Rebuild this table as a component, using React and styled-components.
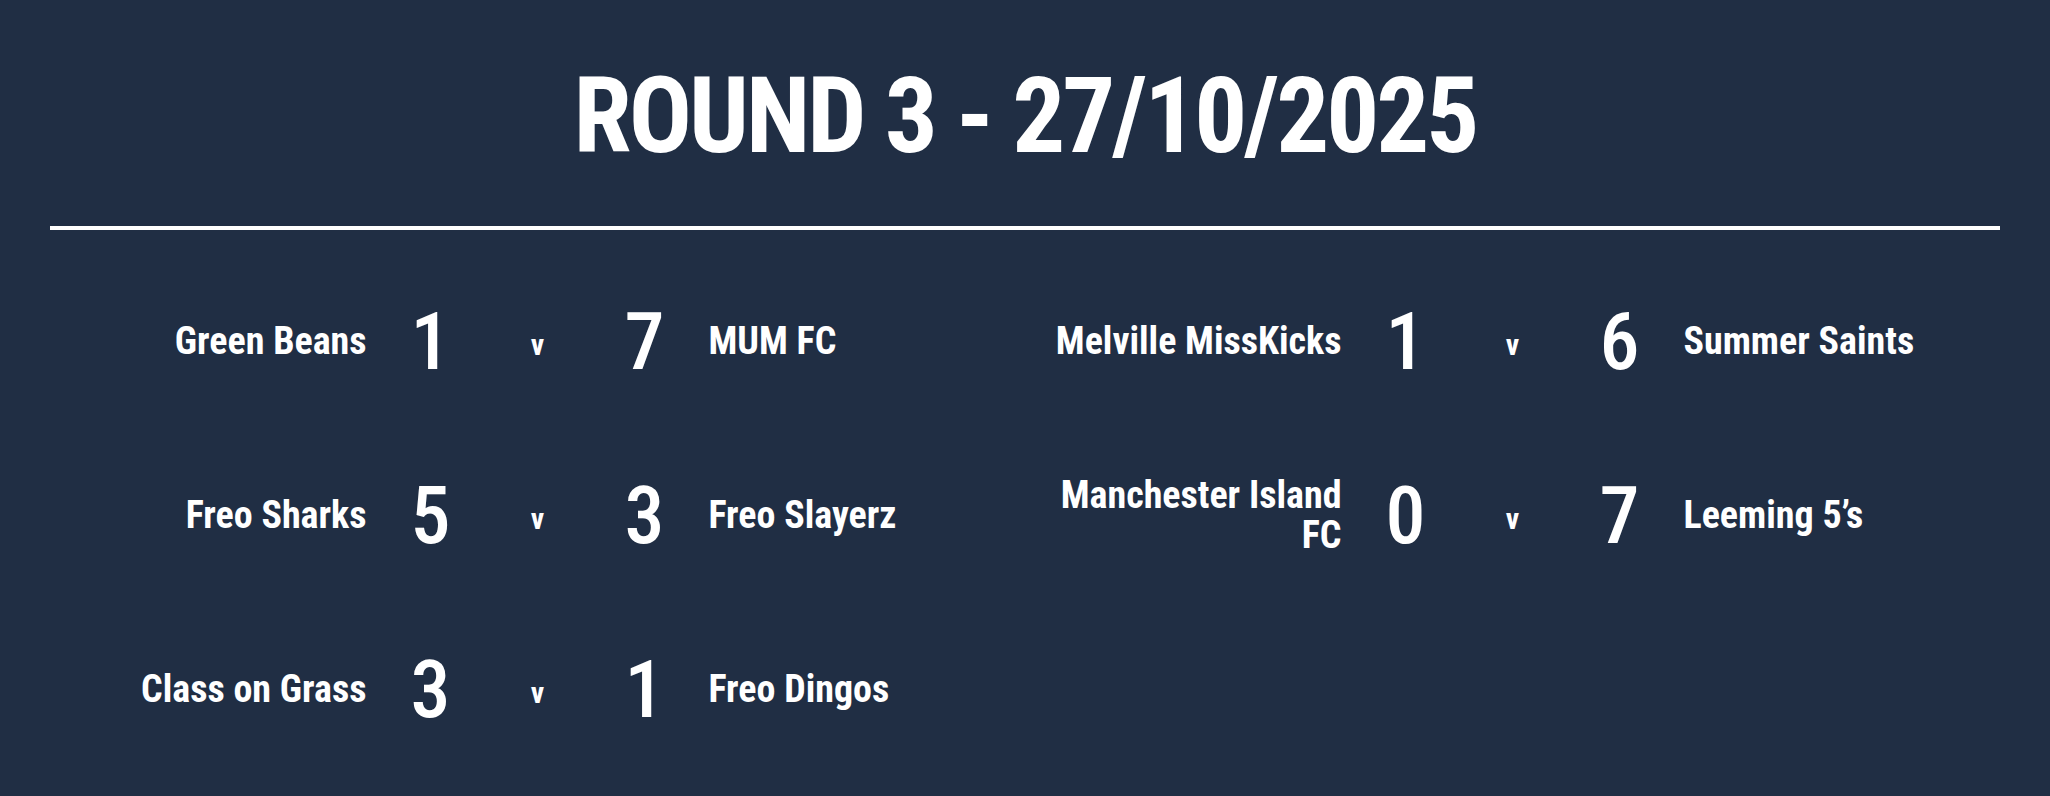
import React from 'react';
import styled, { createGlobalStyle } from 'styled-components';

const GlobalStyle = createGlobalStyle`
  html, body {
    margin: 0;
    padding: 0;
    background: #202e44;
  }
  body {
    font-family: "Roboto Condensed", "Liberation Sans", sans-serif;
    color: #ffffff;
  }
`;

const Page = styled.div`
  width: 2050px;
  height: 796px;
  background: #202e44;
  padding: 64px 50px 0;
  box-sizing: border-box;
  overflow: hidden;
`;

const Title = styled.h1`
  margin: 0;
  font-size: 105px;
  line-height: 105px;
  font-weight: 700;
  letter-spacing: -3px;
  text-align: center;
`;

const Divider = styled.hr`
  margin: 57px 0 0;
  border: 0;
  height: 4px;
  background: #ffffff;
`;

const Fixtures = styled.div`
  display: grid;
  grid-template-columns: 1fr 1fr;
  grid-auto-rows: 174px;
  padding-top: 25px;
`;

const Match = styled.div`
  display: grid;
  grid-template-columns: 1fr 128px 86px 128px 1fr;
  align-items: center;
`;

const Team = styled.div`
  font-size: 38px;
  line-height: 1.05;
  font-weight: 700;
  text-align: ${(p) => (p.$side === 'home' ? 'right' : 'left')};
`;

const Score = styled.div`
  font-size: 80px;
  line-height: 1;
  font-weight: 500;
  text-align: center;
`;

const Versus = styled.div`
  font-size: 30px;
  font-weight: 700;
  text-align: center;
  padding-top: 4px;
`;

const matches = [
  { home: 'Green Beans', hs: 1, as: 7, away: 'MUM FC' },
  { home: 'Melville MissKicks', hs: 1, as: 6, away: 'Summer Saints' },
  { home: 'Freo Sharks', hs: 5, as: 3, away: 'Freo Slayerz' },
  { home: 'Manchester Island FC', hs: 0, as: 7, away: 'Leeming 5\u2019s' },
  { home: 'Class on Grass', hs: 3, as: 1, away: 'Freo Dingos' },
];

export default function App() {
  return (
    <Page>
      <GlobalStyle />
      <Title>ROUND 3 - 27/10/2025</Title>
      <Divider />
      <Fixtures>
        {matches.map((m) => (
          <Match key={m.home}>
            <Team $side="home">{m.home}</Team>
            <Score>{m.hs}</Score>
            <Versus>v</Versus>
            <Score>{m.as}</Score>
            <Team $side="away">{m.away}</Team>
          </Match>
        ))}
      </Fixtures>
    </Page>
  );
}
